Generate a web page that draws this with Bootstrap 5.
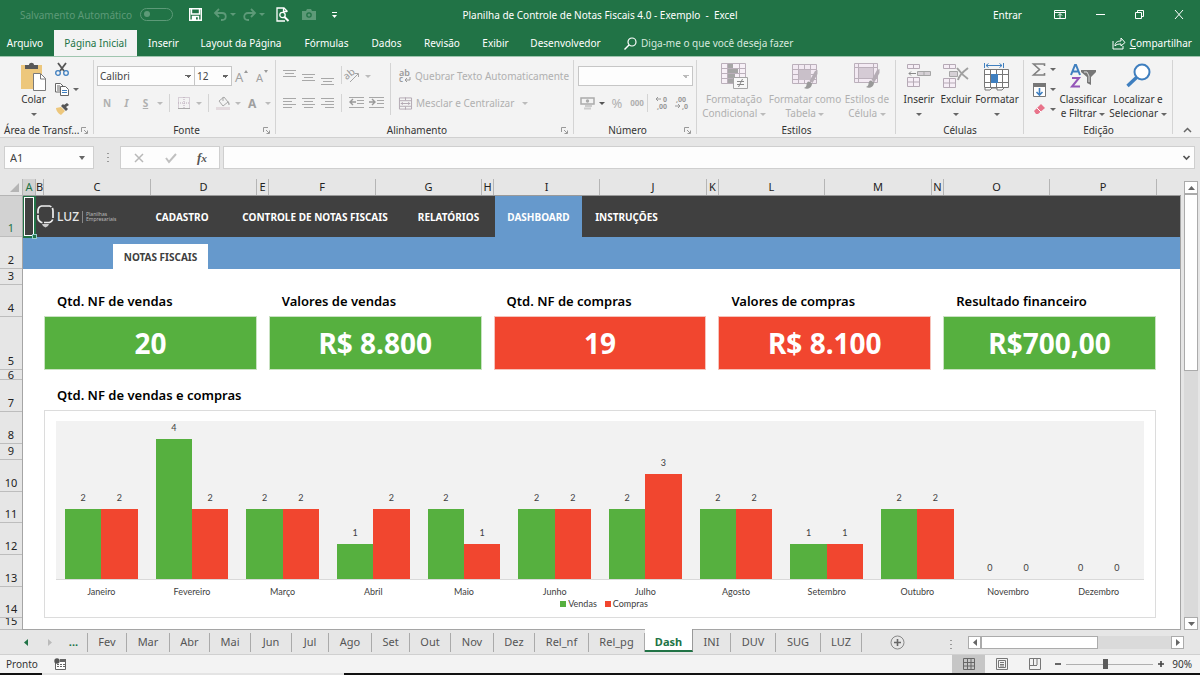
<!DOCTYPE html>
<html lang="pt-BR">
<head>
<meta charset="utf-8">
<meta name="viewport" content="width=device-width, initial-scale=1">
<title>Planilha de Controle de Notas Fiscais 4.0 - Exemplo - Excel</title>
<link href="https://cdn.jsdelivr.net/npm/bootstrap@5.3.0/dist/css/bootstrap.min.css" rel="stylesheet">
<style>
:root{--xl:#217346;--ok:#56b03f;--bad:#f1462f;--azul:#6699cc;--line:#b5b5b5}
body{font-family:"Noto Sans",sans-serif;font-size:10px;line-height:14px;color:#333;background:#e6e6e6;overflow:hidden;white-space:nowrap}
svg{display:block;flex:none;overflow:visible}
button{background:none;border:0;padding:0;color:inherit;line-height:14px;display:flex;align-items:center;justify-content:center}
a{color:inherit;text-decoration:none}
.caret{width:0;height:0;border:3px solid transparent;border-top:3px solid #666;border-bottom:0;flex:none;display:inline-block;vertical-align:middle}
.caret.pale{border-top-color:#5d9a78}
.caret.dark{border-top-color:#555}
.caret.tall{border-top-width:4px}
.dim{color:#b0b0b0}.dim .caret{border-top-color:#bbb}.dim .caret.dark{border-top-color:#555}
.w10{width:10px}.w12{width:12px}.w19{width:19px}.w20{width:20px}
.w10,.w12,.w19,.w20{flex:none;display:flex;justify-content:center}
.vr1{width:1px;background:#d4d4d4;flex:none}
.r1,.r2{display:flex;align-items:center}
.r1{height:20px;margin-top:3px}
.r2{height:18px;margin-top:8px}
.r1>.vr1,.r2>.vr1{height:18px}
/* title bar and ribbon tabs */
.titlebar{height:29px;background:var(--xl);color:#fff;display:grid;grid-template-columns:1fr auto 1fr}
.faded{color:#5d9a78}
.pill{width:33px;height:13px;border:1px solid #5d9a78;border-radius:7px;padding:2px 3px}
.pill i{display:block;width:6px;height:6px;border-radius:50%;background:#5d9a78}
.tabs{height:28px;background:var(--xl);color:#fff;border-bottom:1px solid #9fc5af;padding-top:1px}
.tabs a{display:flex;align-items:center;justify-content:center;height:26px;flex:none}
.tabs a.on{background:#f3f3f3;color:var(--xl)}
.hint{color:#d7e8de}
.t54{width:54px}.t83{width:83px}.t53{width:53px}.t102{width:102px}.t68{width:69px}.t51{width:51px}.t60{width:60px}.t47{width:47px}.t92{width:93px}
/* ribbon */
.ribbon{height:81px;background:#f3f3f3;border-bottom:1px solid #d0d0d0}
.grp{position:relative;margin-top:3px;padding-top:3px;display:flex;flex-direction:column;flex:none}
.grp:after{content:"";position:absolute;right:0;top:0;bottom:3px;width:1px;background:#d4d4d4}
.grp .body{flex:1;display:flex;min-height:0}
.grp footer{height:14px;position:relative;text-align:center;color:#333}
.grp footer svg{position:absolute;right:6px;top:4px}
.g1{width:94px}.g2{width:182px;padding-left:3px}.g3{width:298px}.g4{width:123px}.g5{width:199px}.g6{width:128px}.g7{width:149px}
.big{flex-direction:column;justify-content:flex-start;text-align:center;flex:none}
.big svg{margin-bottom:1px}
.big span{display:block;height:14px}
.box{background:#fdfdfd;border:1px solid #c6c6c6;color:#444;border-radius:0;appearance:none;padding:0 2px;height:20px;line-height:18px;
 background-image:linear-gradient(45deg,transparent 50%,#666 50%),linear-gradient(-45deg,transparent 50%,#666 50%);background-size:3px 3px;background-repeat:no-repeat;background-position:right 6px center,right 3px center}
.box.off{background-image:linear-gradient(45deg,transparent 50%,#bbb 50%),linear-gradient(-45deg,transparent 50%,#bbb 50%)}
.f1{width:98px}.f2{width:38px;margin-left:-1px}.f3{width:115px}
.pct{font-size:13px}.zeros{font-size:8px}
.b6{width:66px}.b7{width:76px}.b8{width:48px}.c1{width:38px}.c2{width:36px}.c3{width:46px}.d1{width:54px}.d2{width:56px}
/* formula bar */
.fbar{height:41px;padding:8px 5px 10px 4px;gap:3px}
.fbar .cell{background:#fdfdfd;border:1px solid #cfcfcf;height:23px;display:flex;align-items:center}
.namebox{width:74px;background:none;border:0;font-size:11px;color:#444;padding:0 5px;outline:0;min-width:0}
.dotbox{padding:0 8px 0 10px}
.dots{width:2px;height:9px;background:repeating-linear-gradient(#999 0 1px,transparent 1px 4px)}
.fx{font:italic 700 13px/14px "Liberation Serif",serif;color:#555}
/* worksheet */
.sheet{flex:1;min-height:0;display:grid;grid-template-columns:23px 1fr 19px;grid-template-rows:17px 1fr}
.cols{display:grid;grid-template-columns:13px 8px 107fr 106fr 12px 107fr 106fr 12px 106fr 107fr 12px 106fr 107fr 12px 106fr 107fr 24px;border-bottom:1px solid #9a9a9a;font-size:11px;line-height:16px;color:#222}
.cols span{border-right:1px solid #b5b5b5;display:flex;justify-content:center}
.cols span.sel{background:#d2d2d2;color:var(--xl)}
.corner{border-right:1px solid var(--line);border-bottom:1px solid var(--line);padding:4px 3px 0 10px}
.rows{display:flex;flex-direction:column;border-right:1px solid #a5a5a5;font-size:11px;line-height:16px;color:#222;overflow:hidden}
.rows span{border-bottom:1px solid #bdbdbd;display:flex;align-items:flex-end;justify-content:center;flex:none;overflow:hidden;height:32px}
.rows .h41{height:41px;background:#d2d2d2;color:var(--xl)}.rows .h16{height:16px}.rows .h53{height:53px}.rows .h10{height:10px;align-items:center}.rows .h12{height:12px}.rows .h31{height:31px}
.page{background:#fff;min-width:0;overflow:hidden;border-right:1px solid #a5a5a5;border-bottom:1px solid #a5a5a5}
.menu{height:41px;background:#404040;color:#fff;font-weight:700}
.cursor{width:14px;height:43px;border:2px solid var(--xl);outline:1px solid #fff;outline-offset:-3px;margin:-1px 0 0 -1px;flex:none;position:relative}
.cursor:after{content:"";position:absolute;right:-3px;bottom:-3px;width:5px;height:5px;background:var(--xl);border:1px solid #9cc}
.menu a{display:flex;align-items:center;justify-content:center;flex:none;height:41px}
.menu a.on{background:var(--azul)}
.m0{width:112px;padding-left:20px}.m2{width:174px}.m3{width:93px}.m4{width:87px}.m5{width:89px}
.logo{width:80px;font-weight:400;gap:3px;padding-left:1px}
.logo b{font:500 12px/14px "Noto Sans",sans-serif;color:#e8e8e8}
.logo small{font-size:5px;line-height:5px;color:#bbb;border-left:1px solid #888;padding:1px 0 1px 3px}
.submenu{height:32px;background:var(--azul);padding:7px 0 0 90px}
.submenu a{display:flex;width:95px;height:25px;background:#fff;color:#404040;font-weight:700;align-items:center;justify-content:center}
.inner{padding:16px 24px 0 21px}
.kpis{display:grid;grid-template-columns:repeat(5,1fr);gap:12px}
h2{font-size:13px;line-height:16px;font-weight:600;color:#000;margin:0;padding:8px 0 0 13px;height:31px}
h2.wide{height:40px;padding-top:17px}
.kpi{height:54px;border:1px solid #c9e2c2;background:var(--ok);color:#fff;font-size:28px;font-weight:700;display:flex;align-items:center;justify-content:center}
.kpi.red{background:var(--bad);border-color:#f6c3bb}
.chart{border:1px solid #dcdcdc;height:208px;padding:10px 11px 0;font-family:Lato,sans-serif;font-size:9px;line-height:12px;color:#404040}
.plot{height:159px;background:#f2f2f2;border-bottom:1px solid #d9d9d9;display:grid;grid-template-columns:repeat(12,1fr)}
.month{display:flex;align-items:flex-end;padding:0 10%}
.month div{flex:1;text-align:center}
.month i{display:block;background:var(--ok);height:calc(var(--n)*35px)}
.month div+div i{background:var(--bad)}
.month span{display:block;margin-bottom:5px}
.axis{display:grid;grid-template-columns:repeat(12,1fr);text-align:center;padding-top:6px}
.key{width:6px;height:6px;display:inline-block;background:var(--ok);margin-right:2px}
.key.red{background:var(--bad)}
.vscroll{padding:2px 2px 0 3px;display:flex;flex-direction:column;grid-row:1/3;grid-column:3}
.sb{background:#fff;border:1px solid #ababab;width:13px;height:13px;flex:none}
.track{background:#dadada}
.vscroll .sb,.vscroll .track{width:14px}
.vthumb{height:177px;background:#fff;border:1px solid #ababab}
/* sheet tabs and status bar */
.sheets{height:25px;font-size:11px;color:#555;border-bottom:1px solid #d0d0d0}
.sheets a{height:19px;border-right:1px solid #aaa;margin-top:3px;line-height:18px;text-align:center;flex:none}
.sheets a.on{background:#fff;color:var(--xl);font-weight:700;border-bottom:2px solid var(--xl);margin-top:-1px;height:23px;line-height:26px;border-right-color:#999}
.sheets a.more{color:var(--xl);font-weight:700}
.s36{width:36px}.s37{width:37px}.s38{width:38px}.s39{width:39px}.s40{width:40px}.s41{width:41px}.s43{width:43px}.s45{width:45px}.s54{width:54px}.s56{width:56px}.s48{width:48px}
.hbar{width:216px;height:13px;margin-top:6px}
.hthumb{width:117px;height:13px;background:#fff;border:1px solid #ababab}
.status{height:18px;background:#f3f3f3;color:#333;padding-left:6px}
.status .view{width:33px;height:18px}
.status .view.on{background:#c6c6c6}
.zoomer{appearance:none;width:87px;height:12px;background:linear-gradient(#b0b0b0,#b0b0b0) center/100% 1px no-repeat;margin:0 5px}
.zoomer::-webkit-slider-thumb{appearance:none;width:5px;height:10px;background:#5c5c5c}
.under{height:2px;background:linear-gradient(90deg,#111 0 42px,#e4e4e4 42px 344px,#111 344px)}
</style>
</head>
<body class="d-flex flex-column vh-100">
<svg width="0" height="0" class="position-absolute"><defs>
<symbol id="launch" viewBox="0 0 7 7"><path d="M.5 5V.5H5M3 3l3 3M6.500 3.500v3h-3" fill="none" stroke="#999"/></symbol>
<symbol id="bars" viewBox="0 0 13 8"><path d="M0 .5h13M2 3.500h9M0 6.500h13" stroke="#a8a8a8"/></symbol>
<symbol id="brush" viewBox="0 0 14 20"><path d="M13.500 0 11 1 5.500 11l3 2 5-9z" fill="#b5adb5"/><path d="M5 11.500c-2 0-2.500 2-2.500 3.500S1 17.500 0 18c3 2 8 0 8-4.500z" fill="#999"/></symbol>
</defs></svg>

<header class="titlebar align-items-center">
 <div class="d-flex align-items-center ps-3">
  <span class="faded ms-1">Salvamento Automático</span><span class="pill ms-2"><i></i></span>
  <button class="ms-3" aria-label="Salvar"><svg width="13" height="13" viewBox="0 0 13 13"><path d="M.7.700h11.600v11.600H.7zM2.500 1v5h8V1M3.500 12V8.500h6V12" fill="none" stroke="#fff" stroke-width="1.400"/><path d="M4 9h3v3H4z" fill="#fff"/></svg></button>
  <button class="ms-2 ps-1" aria-label="Desfazer"><svg width="13" height="12" viewBox="0 0 13 12"><path d="M5 0 1 4l4 4M1.500 4H8c5 0 5 7 0 7H7" fill="none" stroke="#5d9a78" stroke-width="1.800"/></svg></button><span class="w12"><i class="caret pale"></i></span>
  <button class="ms-1" aria-label="Refazer"><svg width="13" height="12" viewBox="0 0 13 12"><path d="m8 0 4 4-4 4M11.500 4H5C0 4 0 11 5 11h1" fill="none" stroke="#5d9a78" stroke-width="1.800"/></svg></button><span class="w12"><i class="caret pale"></i></span>
  <button class="ms-2" aria-label="Visualizar"><svg width="14" height="15" viewBox="0 0 14 15"><path d="M11 5V4L8 1H1v13h8M7.500 1v3.500H11" fill="none" stroke="#fff" stroke-width="1.300"/><circle cx="6.500" cy="8" r="2.700" fill="none" stroke="#fff" stroke-width="1.300"/><path d="m8.500 10 4 4" stroke="#fff" stroke-width="2"/></svg></button>
  <button class="ms-2 ps-1" aria-label="Câmera"><svg width="14" height="11" viewBox="0 0 14 11"><path d="M0 2h4l1-2h4l1 2h4v9H0z" fill="#5d9a78"/><circle cx="7" cy="6" r="2.800" fill="#217346"/><circle cx="7" cy="6" r="1.500" fill="#5d9a78"/></svg></button>
  <button class="ms-3" aria-label="Personalizar"><svg width="5" height="6" viewBox="0 0 5 6"><path d="M0 .5h5" stroke="#fff"/><path d="M0 3h5L2.500 6z" fill="#fff"/></svg></button>
 </div>
 <span>Planilha de Controle de Notas Fiscais 4.0 - Exemplo&nbsp; - &nbsp;Excel</span>
 <div class="d-flex align-items-center justify-content-end pe-3">
  <a href="#">Entrar</a>
  <button class="ms-4 ps-2" aria-label="Faixa"><svg width="12" height="9" viewBox="0 0 12 9"><path d="M.5.500h11v8H.5zM1 2.500h10M6 8V4M4 5.500l2-2 2 2" fill="none" stroke="#fff"/></svg></button>
  <button class="ms-4 ps-1" aria-label="Minimizar"><svg width="12" height="9" viewBox="0 0 12 9"><path d="M2 4.500h9" stroke="#fff"/></svg></button>
  <button class="ms-4 ps-1" aria-label="Restaurar"><svg width="12" height="9" viewBox="0 0 12 9"><path d="M1.500 2.500h6v6h-6zM3.500 2V.5h6v6H8" fill="none" stroke="#fff"/></svg></button>
  <button class="ms-4 ps-1" aria-label="Fechar"><svg width="10" height="9" viewBox="0 0 10 9"><path d="m1 0 8 9M9 0 1 9" stroke="#fff"/></svg></button>
 </div>
</header>

<nav class="tabs d-flex">
 <a class="t54 pe-1" href="#">Arquivo</a><a class="t83 on" href="#">Página Inicial</a><a class="t53" href="#">Inserir</a><a class="t102" href="#">Layout da Página</a><a class="t68" href="#">Fórmulas</a><a class="t51" href="#">Dados</a><a class="t60" href="#">Revisão</a><a class="t47" href="#">Exibir</a><a class="t92" href="#">Desenvolvedor</a>
 <a class="ms-2 ps-1" href="#"><svg width="13" height="13" viewBox="0 0 13 13" class="me-1"><circle cx="8" cy="5" r="4" fill="none" stroke="#fff" stroke-width="1.200"/><path d="M5 8 .5 12.500" stroke="#fff" stroke-width="1.500"/></svg><span class="hint">Diga-me o que você deseja fazer</span></a>
 <a class="ms-auto pe-2" href="#"><svg width="14" height="13" viewBox="0 0 14 13" class="me-1"><path d="M1 4v8h10V9M3 9c0-4 3-5 6-5V1l4 4.500L9 9V7C6 7 4 7.500 3 9z" fill="none" stroke="#fff"/></svg><span><u>C</u>ompartilhar</span></a>
</nav>

<section class="ribbon d-flex">
 <div class="grp g1">
  <div class="body">
   <button class="big ms-3 ps-1" aria-label="Colar"><svg width="27" height="28" viewBox="0 0 27 28"><path d="M1 2h21v24H1z" fill="#edc77c"/><path d="M5 2h4c0-3 5-3 5 0h4v4H5z" fill="#595959"/><path d="M13.500 10.500h7l5 5v12h-12z" fill="#fff" stroke="#7a7a7a"/><path d="M20.500 11v5H26" fill="none" stroke="#7a7a7a"/></svg><span>Colar</span><span><i class="caret"></i></span></button>
   <div class="d-flex flex-column justify-content-between ps-2 pb-2">
    <button aria-label="Recortar" class="me-auto"><svg width="14" height="13" viewBox="0 0 14 13"><path d="m3 0 6 8M11 0 5 8" stroke="#555" stroke-width="1.800"/><circle cx="3" cy="10" r="2.300" fill="none" stroke="#3f7fbf" stroke-width="1.300"/><circle cx="11" cy="10" r="2.300" fill="none" stroke="#3f7fbf" stroke-width="1.300"/></svg></button>
    <button aria-label="Copiar"><svg width="14" height="13" viewBox="0 0 14 13"><path d="M.5.500h5l3 3V9h-8zM2 3h3M2 5h3M2 7h3" fill="#fff" stroke="#666"/><path d="M5.500 3.500h5l3 3v6h-8z" fill="#fff" stroke="#666"/><path d="M7 7.500h5M7 9.500h5" stroke="#3f7fbf"/></svg><i class="caret ms-1"></i></button>
    <button aria-label="Pincel" class="me-auto"><svg width="14" height="12" viewBox="0 0 14 12"><path d="m1 5 5-1 4 4-4 4C4 11 1 8 1 5z" fill="#edc77c"/><path d="m6 3 5 5 2-2-2-2 3-2-2-2-3 2-1-1z" fill="#555"/></svg></button>
   </div>
  </div>
  <footer class="text-start ps-1">Área de Transf...<svg width="7" height="7"><use href="#launch"/></svg></footer>
 </div>
 <div class="grp g2">
  <div class="body flex-column">
   <div class="r1"><select class="box f1" aria-label="Fonte"><option>Calibri</option></select><select class="box f2" aria-label="Tamanho"><option>12</option></select>
    <button class="w20 dim"><svg width="14" height="13" viewBox="0 0 14 13"><path d="M9 3 11 0l2 3z" fill="#999"/><text y="12" font-size="13" fill="#a0a0a0">A</text></svg></button><button class="w20 dim"><svg width="12" height="13" viewBox="0 0 12 13"><path d="M8 0h4l-2 3z" fill="#999"/><text y="12" font-size="11" fill="#a0a0a0">A</text></svg></button></div>
   <div class="r2 dim"><button class="w20"><b>N</b></button><button class="w19"><i class="fw-bold">I</i></button><button class="w19"><b><u>S</u></b></button><span class="w10"><i class="caret"></i></span><span class="vr1 ms-1"></span>
    <button class="w20 ms-1"><svg width="12" height="12" viewBox="0 0 12 12"><path d="M.5.500h11v11H.5zM6 0v12M0 6h12" fill="none" stroke="#b9a9b9" stroke-dasharray="1 1"/><path d="M0 11.500h12" stroke="#aaa"/></svg></button><span class="w10"><i class="caret"></i></span><span class="vr1 ms-1"></span>
    <button class="w20 ms-1"><svg width="15" height="14" viewBox="0 0 15 14"><path d="m3 5 5-4 4 5-5 4zM7 1v4" fill="none" stroke="#a8a8a8"/><path d="M12 5c2 2 2 4 1 4s-1-2-1-4z" fill="#a8a8a8"/><path d="M0 11h14v3H0z" fill="#e3dade"/></svg></button><span class="w10"><i class="caret"></i></span><button class="w20 fw-bold"><svg width="10" height="12" viewBox="0 0 10 12"><text y="11" font-size="12" fill="#a0a0a0">A</text></svg></button><span class="w10"><i class="caret"></i></span></div>
  </div>
  <footer>Fonte<svg width="7" height="7"><use href="#launch"/></svg></footer>
 </div>
 <div class="grp g3">
  <div class="body dim ps-1">
   <div class="d-flex flex-column">
    <div class="r1 align-items-start"><button class="w19 pt-1"><svg width="13" height="8"><use href="#bars"/></svg></button><button class="w19 pt-2"><svg width="13" height="8"><use href="#bars"/></svg></button><button class="w19 pt-2"><svg width="13" height="8" class="mt-1"><use href="#bars"/></svg></button><span class="vr1 ms-1"></span><button class="w20 align-self-center" aria-label="Orientação"><svg width="15" height="14" viewBox="0 0 15 14"><text x="0" y="9" font-size="10" fill="#999" transform="rotate(-40 4 8)">ab</text><path d="m5 13 8-8M9.500 4.500h4V8" fill="none" stroke="#a5a5a5"/></svg></button><span class="w12 align-self-center"><i class="caret"></i></span></div>
    <div class="r2"><button class="w19"><svg width="13" height="11" viewBox="0 0 13 11"><path d="M0 .5h13M0 3.500h9M0 6.500h13M0 9.500h9" stroke="#a8a8a8"/></svg></button><button class="w19"><svg width="13" height="11" viewBox="0 0 13 11"><path d="M0 .5h13M2 3.500h9M0 6.500h13M2 9.500h9" stroke="#a8a8a8"/></svg></button><button class="w19"><svg width="13" height="11" viewBox="0 0 13 11"><path d="M0 .5h13M4 3.500h9M0 6.500h13M4 9.500h9" stroke="#a8a8a8"/></svg></button><span class="vr1 ms-1"></span>
     <button class="w20 ms-1"><svg width="15" height="12" viewBox="0 0 15 12"><path d="M0 .5h15M8 3.500h7M8 6.500h7M0 10.500h15" stroke="#a8a8a8"/><path d="M7 5H1M4 2 1 5l3 3" fill="none" stroke="#999" stroke-width="1.400"/></svg></button><button class="w20"><svg width="15" height="12" viewBox="0 0 15 12"><path d="M0 .5h15M8 3.500h7M8 6.500h7M0 10.500h15" stroke="#a8a8a8"/><path d="M0 5h6M3 2l3 3-3 3" fill="none" stroke="#999" stroke-width="1.400"/></svg></button></div>
   </div>
   <span class="vr1 ms-1 me-2 mb-2"></span>
   <div class="d-flex flex-column align-items-start">
    <button class="r1"><svg width="12" height="14" viewBox="0 0 12 14" class="me-1"><text y="7" font-size="9" font-weight="600" fill="#999">ab</text><text y="13" font-size="8" font-weight="600" fill="#999">c</text><path d="M11 8v3H6M8 9l-2 2 2 2" fill="none" stroke="#999"/></svg>Quebrar Texto Automaticamente</button>
    <button class="r2"><svg width="13" height="13" viewBox="0 0 14 13" class="me-1"><path d="M.5.500h13v12H.5zM1 3.500h12M1 9.500h12M7 0v3M7 10v3M2 6.500h10M4 5 2.500 6.500 4 8M10 5l1.500 1.500L10 8" fill="none" stroke="#b0a5b0"/></svg>Mesclar e Centralizar<i class="caret ms-2"></i></button>
   </div>
  </div>
  <footer class="pe-3">Alinhamento<svg width="7" height="7"><use href="#launch"/></svg></footer>
 </div>
 <div class="grp g4">
  <div class="body flex-column ps-1">
   <div class="r1"><select class="box off f3 ms-n1" aria-label="Formato de número"><option></option></select></div>
   <div class="r2 dim"><button class="w19"><svg width="15" height="13" viewBox="0 0 15 13"><path d="M1 1h13v6H1z" fill="none" stroke="#aaa" stroke-width="1.500"/><circle cx="7.500" cy="4" r="1.700" fill="#aaa"/><path d="M5 9h7M4 11.500h7" stroke="#ccc" stroke-width="2"/></svg></button><span class="w10"><i class="caret dark"></i></span><button class="w20 pct">%</button><button class="w20 fw-bold zeros">000</button><span class="vr1"></span>
    <button class="w20 ms-1"><svg width="14" height="14" viewBox="0 0 14 14"><text x="8" y="6" font-size="7" font-weight="700" fill="#999">0</text><text x="2" y="13" font-size="7" font-weight="700" fill="#999">,00</text><path d="M6 3H1M3 1 1 3l2 2" fill="none" stroke="#999"/></svg></button><button class="w20"><svg width="14" height="14" viewBox="0 0 14 14"><text x="1" y="6" font-size="7" font-weight="700" fill="#999">,00</text><text x="7" y="13" font-size="7" font-weight="700" fill="#999">,0</text><path d="M0 10h5M3 8l2 2-2 2" fill="none" stroke="#999"/></svg></button></div>
  </div>
  <footer class="pe-3">Número<svg width="7" height="7"><use href="#launch"/></svg></footer>
 </div>
 <div class="grp g5">
  <div class="body dim ps-1">
   <button class="big b6"><svg width="27" height="28" viewBox="0 0 27 28"><path d="M.5.500h24v20H.5zM6.500 0v21M18.500 0v21M0 5.500h25M0 10.500h25M0 15.500h25" fill="#f7f0f7" stroke="#bbb0bb"/><path d="M7 1h5v4H7zM7 6h10v4H7zM7 11h7v4H7zM7 16h5v4H7z" fill="#a5a5a5"/><path d="M12.500 14.500h14v11h-14z" fill="#f8f8f8" stroke="#a5a5a5"/><path d="M16 18.500h7M16 21.500h7M21.500 16l-4 8" stroke="#888"/></svg><span>Formatação</span><span>Condicional <i class="caret"></i></span></button>
   <button class="big b7"><svg width="27" height="28" viewBox="0 0 27 28"><path d="M.5 1.500h24v19H.5zM6.500 1v19M12.500 1v19M18.500 1v19M0 6.500h25M0 11.500h25M0 16.500h25" fill="#f3eaf3" stroke="#bbb0bb"/><path d="M7 7h12v10H7z" fill="#c9c0c9"/><use href="#brush" x="12" y="7" width="14" height="20"/></svg><span>Formatar como</span><span>Tabela <i class="caret"></i></span></button>
   <button class="big b8"><svg width="27" height="28" viewBox="0 0 27 28"><path d="M.5.500h23v19H.5zM4.500 0v20M19.500 0v20M0 4.500h24M0 15.500h24" fill="#f3eaf3" stroke="#bbb0bb"/><path d="M5 5h14v10H5z" fill="#d5cbd5"/><use href="#brush" x="12" y="6" width="14" height="20"/></svg><span>Estilos de</span><span>Célula <i class="caret"></i></span></button>
  </div>
  <footer>Estilos</footer>
 </div>
 <div class="grp g6">
  <div class="body ps-1">
   <button class="big c1"><svg width="24" height="28" viewBox="0 0 24 28"><path d="M.5 1.500h12v4H.5zM6.500 1v5M.5 14.500h12v9H.5zM6.500 14v10M0 19h13" fill="#f6eef6" stroke="#b5a9b5"/><path d="M10.500 8.500h13v4h-13zM17 8v5" fill="#d5d0d5" stroke="#a5a5a5"/><path d="M9 10.500H2M4 8.500l-2 2 2 2" fill="none" stroke="#888"/></svg><span>Inserir</span><span><i class="caret"></i></span></button>
   <button class="big c2"><svg width="26" height="28" viewBox="0 0 26 28"><path d="M.5 1.500h12v4H.5zM6.500 1v5M.5 15.500h12v9H.5zM6.500 15v10M0 20h13" fill="#f6eef6" stroke="#b5a9b5"/><path d="M6.500 8.500h8v5h-8z" fill="#d5d0d5" stroke="#a5a5a5"/><path d="M14 5c3 4 8 9 11 11M25 5c-4 3-9 8-10 12" fill="none" stroke="#a0a0a0" stroke-width="2"/></svg><span>Excluir</span><span><i class="caret"></i></span></button>
   <button class="big c3"><svg width="26" height="28" viewBox="0 0 26 28"><path d="M.5 0v5M19.500 0v5M2 2.500h16M4.500.500 2 2.500l2.500 2M15.500.500l2.500 2-2.500 2" fill="none" stroke="#3f7fbf"/><path d="M.5 6.500h24v18H.5zM6.500 6v19M18.500 6v19M12.500 6v19M0 11.500h25M0 19.500h25" fill="#fff" stroke="#777"/><path d="M7 11h7v9H7z" fill="#3f7fbf"/><path d="M1 25v2h5l2-2h5v2h5l2-2" fill="#fff" stroke="#777"/></svg><span>Formatar</span><span><i class="caret"></i></span></button>
  </div>
  <footer>Células</footer>
 </div>
 <div class="grp g7">
  <div class="body">
   <div class="d-flex flex-column justify-content-between pb-2 ms-1">
    <button aria-label="Soma"><svg width="14" height="13" viewBox="0 0 14 13" class="ms-1"><path d="M12.500 3V1H1.500l6 5.500-6 5.500h11v-2" fill="none" stroke="#808080" stroke-width="1.600"/></svg><i class="caret ms-1"></i></button>
    <button aria-label="Preencher"><svg width="13" height="14" viewBox="0 0 13 14" class="ms-1"><path d="M.5.500h12v13H.5z" fill="#fff" stroke="#777"/><path d="M0 0h13v4H0z" fill="#777"/><path d="M6.500 5v7M3.500 9l3 3 3-3" fill="none" stroke="#3f7fbf" stroke-width="1.600"/></svg><i class="caret ms-1"></i></button>
    <button aria-label="Limpar"><svg width="13" height="12" viewBox="0 0 13 12" class="ms-1"><path d="m1 8 7-7 4 4-7 6H3z" fill="#e8738a"/><path d="m4 5 4 4" stroke="#fff"/></svg><i class="caret ms-1"></i></button>
   </div>
   <button class="big d1"><svg width="27" height="28" viewBox="0 0 27 28"><path d="M1 12 5 2h1l4 10M3 8.500h5.500" fill="none" stroke="#3f7fbf" stroke-width="2"/><path d="M2 15h7L2 23.500h8" fill="none" stroke="#9455b8" stroke-width="2"/><path d="M11 7h15v2l-5 5v8l-4-2v-6l-6-5z" fill="#777"/><path d="M14 9h3l2 4v6" stroke="#ddd" fill="none"/></svg><span>Classificar</span><span>e Filtrar <i class="caret"></i></span></button>
   <button class="big d2"><svg width="25" height="28" viewBox="0 0 25 28"><circle cx="16" cy="9" r="7.500" fill="#fff" stroke="#3f7fbf" stroke-width="2"/><path d="M10.500 14.500 1.500 23" stroke="#3f7fbf" stroke-width="3.500"/></svg><span>Localizar e</span><span>Selecionar <i class="caret"></i></span></button>
  </div>
  <footer>Edição</footer>
 </div>
 <button class="ms-auto me-2 mt-auto mb-1" aria-label="Recolher"><svg width="9" height="6" viewBox="0 0 9 6"><path d="m1 5 3.500-3.500L8 5" fill="none" stroke="#666" stroke-width="1.500"/></svg></button>
</section>

<section class="fbar d-flex">
 <div class="cell pe-2"><input class="namebox" aria-label="Caixa de nome" value="A1"><i class="caret tall"></i></div>
 <div class="dotbox d-flex align-items-center"><i class="dots"></i></div>
 <div class="cell px-2 gap-3"><button class="ps-1" aria-label="Cancelar"><svg width="12" height="10" viewBox="0 0 12 10"><path d="m2 1 8 8M10 1 2 9" stroke="#b8b8b8" stroke-width="1.500"/></svg></button><button class="ps-1" aria-label="Inserir"><svg width="12" height="10" viewBox="0 0 12 10"><path d="m1 5 3 4 7-8" fill="none" stroke="#c0c0c0" stroke-width="2"/></svg></button><button class="ps-1 pe-1" aria-label="Função"><i class="fx">f<small>x</small></i></button></div>
 <div class="cell flex-fill pe-1"><input class="namebox flex-fill" aria-label="Fórmula"><svg width="7" height="6" viewBox="0 0 7 6"><path d="m.5 1 3 3 3-3" fill="none" stroke="#555" stroke-width="1.700"/></svg></div>
</section>

<main class="sheet">
 <div class="corner"><svg width="9" height="10" viewBox="0 0 9 10"><path d="M9 0v9H0z" fill="#b5b5b5"/></svg></div>
 <div class="cols"><span class="sel">A</span><span>B</span><span>C</span><span>D</span><span>E</span><span>F</span><span>G</span><span>H</span><span>I</span><span>J</span><span>K</span><span>L</span><span>M</span><span>N</span><span>O</span><span>P</span><i></i></div>
 <div class="vscroll"><button class="sb" aria-label="Acima"><svg width="7" height="4"><path d="M0 4 3.500 0 7 4z" fill="#666"/></svg></button><div class="track flex-fill"><div class="vthumb"></div></div><button class="sb" aria-label="Abaixo"><svg width="7" height="4"><path d="M0 0h7L3.500 4z" fill="#666"/></svg></button></div>
 <div class="rows"><span class="h41">1</span><span>2</span><span class="h16">3</span><span>4</span><span class="h53">5</span><span class="h10">6</span><span>7</span><span>8</span><span class="h16">9</span><span>10</span><span class="h31">11</span><span>12</span><span>13</span><span class="h31">14</span><span class="h12">15</span></div>
 <div class="page">
  <nav class="menu d-flex">
   <i class="cursor"></i>
   <div class="logo d-flex align-items-center"><svg width="17" height="23" viewBox="0 0 17 23"><path d="M4.500 1h8Q16 2 16 6v7q0 3-3.500 4.500h-8Q1 16 1 13V6q0-4 3.500-5z" fill="none" stroke="#eee" stroke-width="1.700" stroke-dasharray="10 1.500"/><path d="M5 19h7l-1 2-2.500 1.500L6 21z" fill="#ccc"/></svg><b>LUZ</b><small>Planilhas<br>Empresariais</small></div>
   <a class="m0" href="#">CADASTRO</a><a class="m2" href="#">CONTROLE DE NOTAS FISCAIS</a><a class="m3" href="#">RELATÓRIOS</a><a class="m4 on" href="#">DASHBOARD</a><a class="m5" href="#">INSTRUÇÕES</a>
  </nav>
  <div class="submenu"><a href="#">NOTAS FISCAIS</a></div>
  <div class="inner">
   <div class="kpis">
    <div><h2>Qtd. NF de vendas</h2><div class="kpi">20</div></div>
    <div><h2>Valores de vendas</h2><div class="kpi">R$ 8.800</div></div>
    <div><h2>Qtd. NF de compras</h2><div class="kpi red">19</div></div>
    <div><h2>Valores de compras</h2><div class="kpi red">R$ 8.100</div></div>
    <div><h2>Resultado financeiro</h2><div class="kpi">R$700,00</div></div>
   </div>
   <h2 class="wide">Qtd. NF de vendas e compras</h2>
   <div class="chart"><div class="plot" id="plot"></div><div class="axis" id="axis"></div>
    <div class="d-flex justify-content-center gap-2 ps-2"><span><i class="key"></i>Vendas</span><span><i class="key red"></i>Compras</span></div></div>
  </div>
 </div>
</main>

<nav class="sheets d-flex">
 <button class="ms-4" aria-label="Anterior"><svg width="4" height="7"><path d="M4 0v7L0 3.500z" fill="#217346"/></svg></button><button class="ms-3 ps-1" aria-label="Próxima"><svg width="4" height="7"><path d="M0 0v7l4-3.500z" fill="#bbb"/></svg></button>
 <a class="s36 ps-2 more" href="#">...</a><a class="s39" href="#">Fev</a><a class="s43" href="#">Mar</a><a class="s40" href="#">Abr</a><a class="s41" href="#">Mai</a><a class="s41" href="#">Jun</a><a class="s37" href="#">Jul</a><a class="s43" href="#">Ago</a><a class="s38" href="#">Set</a><a class="s41" href="#">Out</a><a class="s43" href="#">Nov</a><a class="s41" href="#">Dez</a><a class="s54" href="#">Rel_nf</a><a class="s56" href="#">Rel_pg</a><a class="s48 on" href="#">Dash</a><a class="s38" href="#">INI</a><a class="s45" href="#">DUV</a><a class="s45" href="#">SUG</a><a class="s41" href="#">LUZ</a>
 <button class="ms-4 ps-1" aria-label="Nova planilha"><svg width="15" height="15" viewBox="0 0 15 15"><circle cx="7.500" cy="7.500" r="6.500" fill="none" stroke="#888"/><path d="M7.500 4v7M4 7.500h7" stroke="#666" stroke-width="1.600"/></svg></button>
 <div class="ms-auto d-flex align-items-center"><i class="dots me-3 mt-1"></i></div>
 <div class="hbar track d-flex me-3"><button class="sb" aria-label="Esquerda"><svg width="4" height="7"><path d="M4 0v7L0 3.500z" fill="#666"/></svg></button><div class="hthumb"></div><button class="sb ms-auto" aria-label="Direita"><svg width="4" height="7"><path d="M0 0v7l4-3.500z" fill="#666"/></svg></button></div>
</nav>
<footer class="status d-flex align-items-center">
 <span>Pronto</span><button class="ms-3" aria-label="Macro"><svg width="12" height="12" viewBox="0 0 12 12"><path d="M1.500 4v7.500h10v-10H6" fill="#fff" stroke="#666"/><path d="M6 1h6v3H6zM3 6h2v1H3zM6 6h2v1H6zM9 6h2v1H9zM3 8h2v1H3zM6 8h2v1H6zM9 8h2v1H9z" fill="#666"/><circle cx="3" cy="3" r="2.700" fill="#555"/></svg></button>
 <button class="view on ms-auto" aria-label="Normal"><svg width="12" height="12" viewBox="0 0 12 12"><path d="M.5.500h11v11H.5zM4.500 0v12M8 0v12M0 4.500h12M0 8h12" fill="none" stroke="#666"/></svg></button><button class="view" aria-label="Layout"><svg width="12" height="12" viewBox="0 0 12 12"><path d="M.5.500h11v11H.5zM2.500 2.500h7v7h-7zM4 4.500h4M4 6.500h4M4 8h4" fill="none" stroke="#777"/></svg></button><button class="view" aria-label="Quebras"><svg width="12" height="12" viewBox="0 0 12 12"><path d="M.5.500h11v11H.5zM4.500 1v6M8 1v6M1 7.500h7" fill="none" stroke="#777"/></svg></button>
 <button class="ms-1" aria-label="Menos"><svg width="6" height="8"><path d="M0 4h6" stroke="#444" stroke-width="1.600"/></svg></button><input type="range" class="zoomer" min="10" max="190" value="90" aria-label="Zoom"><button aria-label="Mais"><svg width="6" height="8"><path d="M0 4h6M3 1v6" stroke="#444" stroke-width="1.600"/></svg></button>
 <span class="ms-2 pe-1 me-1">90%</span>
</footer>
<div class="under"></div>
<script>
const data=[["Janeiro",2,2],["Fevereiro",4,2],["Março",2,2],["Abril",1,2],["Maio",2,1],["Junho",2,2],["Julho",2,3],["Agosto",2,2],["Setembro",1,1],["Outubro",2,2],["Novembro",0,0],["Dezembro",0,0]];
const bar=n=>`<div><span>${n}</span><i style="--n:${n}"></i></div>`;
plot.innerHTML=data.map(d=>`<div class="month">${bar(d[1])}${bar(d[2])}</div>`).join("");
axis.innerHTML=data.map(d=>`<span>${d[0]}</span>`).join("");
</script>
<script src="https://cdn.jsdelivr.net/npm/bootstrap@5.3.0/dist/js/bootstrap.bundle.min.js"></script>
</body>
</html>
